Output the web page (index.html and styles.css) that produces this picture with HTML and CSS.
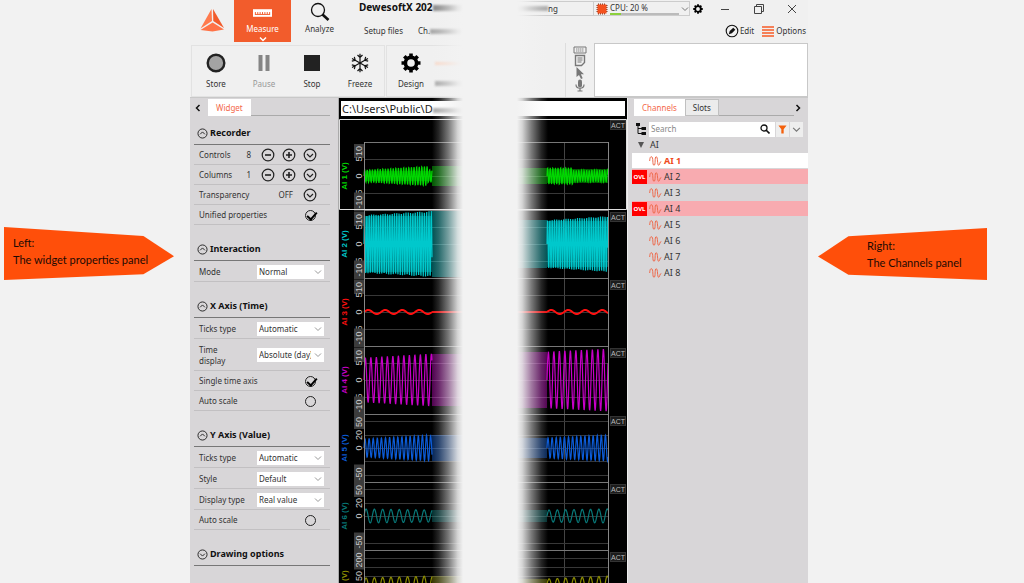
FILE: index.html
```html
<!DOCTYPE html>
<html lang="en">
<head>
<meta charset="utf-8">
<title>DewesoftX panels</title>
<link rel="stylesheet" href="styles.css">
</head>
<body>
<svg class="defs" aria-hidden="true">
  <symbol id="i-down" viewBox="0 0 14 14"><circle cx="7" cy="7" r="5.8"/><path d="M4 6l3 3 3-3"/></symbol>
  <symbol id="i-up" viewBox="0 0 14 14"><circle cx="7" cy="7" r="5.8"/><path d="M4 8l3-3 3 3"/></symbol>
  <symbol id="i-minus" viewBox="0 0 14 14"><circle cx="7" cy="7" r="5.8"/><path d="M4 7h6" stroke-width="1.6"/></symbol>
  <symbol id="i-plus" viewBox="0 0 14 14"><circle cx="7" cy="7" r="5.8"/><path d="M4 7h6M7 4v6" stroke-width="1.6"/></symbol>
  <symbol id="i-chev" viewBox="0 0 8 8"><path d="M1 2.5l3 3 3-3"/></symbol>
  <symbol id="i-gear" viewBox="0 0 20 20"><circle cx="10" cy="10" r="5.6" fill="none" stroke="#000" stroke-width="3.6"/><path d="M10 0.500v4M10 15.500v4M0.500 10h4M15.500 10h4M3.300 3.300l2.800 2.800M13.900 13.900l2.800 2.800M16.700 3.300l-2.800 2.800M6.100 13.900l-2.800 2.800" fill="none" stroke="#000" stroke-width="3.600"/></symbol>
  <symbol id="i-wave" viewBox="0 0 13 10"><path d="M.7 5C.9 1.500 1.500.7 2.300.7 4.800.7 3 9.300 5 9.300S5.300.7 7.200.7 8 9.300 9.700 9.300c1.300 0 .8-4 2.600-3.800" fill="none" stroke="#ee6a4c" stroke-width="1"/></symbol>
</svg>
<main class="stage">
  <aside class="note note-left"><p class="flag flag-left">Left:<br>The widget properties panel</p></aside>

  <section class="slice slice-left">
    <header class="topbar">
      <svg class="logo" viewBox="0 0 28 24"><path d="M13.500 1L14 13 2.500 20.500z" fill="#ff7a4d"/><path d="M15 1l.3 12L26 20z" fill="#f25c2c"/><path d="M2.500 22L14.600 14.500 26 21.500 14.500 23.500z" fill="#ff7347"/></svg>
      <button class="mode mode-on">
        <svg class="ruler" viewBox="0 0 20 8"><path d="M0 0h20v8H0z" fill="#fff"/><path d="M2.500 5.500V3M5 5.500V3M7.500 5.500V3M10 5.500V3M12.500 5.500V3M15 5.500V3M17.500 5.500V3M2 5.500h16" stroke="#f25c2c" fill="none"/></svg>
        <span>Measure</span>
        <svg class="tiny" viewBox="0 0 8 8"><path d="M1 2.500l3 3 3-3" fill="none" stroke="#fff" stroke-width="1.500"/></svg>
      </button>
      <button class="mode">
        <svg class="lens" viewBox="0 0 20 20"><circle cx="8" cy="8" r="6.500" fill="none" stroke="#111" stroke-width="1.300"/><path d="M12.500 12.500l6 5.500" stroke="#111" stroke-width="2.600"/></svg>
        <span>Analyze</span>
      </button>
      <div class="titles">
        <h1 class="apptitle">DewesoftX 202<i class="smear smear-dark"></i></h1>
        <nav class="menu"><a href="#">Setup files</a><a href="#">Ch.<i class="smear"></i></a></nav>
      </div>
    </header>
    <div class="toolbar">
      <div class="tools">
        <button class="tool"><svg viewBox="0 0 20 20"><circle cx="10" cy="10" r="8.300" fill="#a3a3a3" stroke="#222" stroke-width="2.400"/></svg>Store</button>
        <button class="tool tool-off"><svg viewBox="0 0 20 20"><path d="M4.500 2h4v16h-4zM11.500 2h4v16h-4z" fill="#858585"/></svg>Pause</button>
        <button class="tool"><svg viewBox="0 0 20 20"><path d="M2 2h16v16H2z" fill="#222"/></svg>Stop</button>
        <button class="tool"><svg viewBox="0 0 20 20"><g fill="none" stroke="#111" stroke-width="1.200"><path id="arm" d="M10 10V.8M7.500 2l2.500 2.500 2.500-2.500"/><use href="#arm" transform="rotate(60 10 10)"/><use href="#arm" transform="rotate(120 10 10)"/><use href="#arm" transform="rotate(180 10 10)"/><use href="#arm" transform="rotate(240 10 10)"/><use href="#arm" transform="rotate(300 10 10)"/></g></svg>Freeze</button>
      </div>
      <div class="tools">
        <button class="tool"><svg><use href="#i-gear"/></svg>Design</button>
        <div class="smears"><i class="smear smear-warm"></i><i class="smear"></i></div>
      </div>
    </div>
    <div class="body">
      <div class="panel">
        <div class="tabs">
          <button class="arrow" aria-label="Collapse"><svg viewBox="0 0 8 8"><path d="M5.500 1l-3 3 3 3" fill="none" stroke="#111" stroke-width="1.500"/></svg></button>
          <button class="tab tab-on">Widget</button>
          <span class="tabline"></span>
        </div>
        <section class="group">
          <h2><svg><use href="#i-up"/></svg>Recorder</h2>
          <div class="row"><span>Controls</span><b>8</b><button aria-label="Fewer controls"><svg><use href="#i-minus"/></svg></button><button aria-label="More controls"><svg><use href="#i-plus"/></svg></button><button aria-label="Choose controls"><svg><use href="#i-down"/></svg></button></div>
          <div class="row"><span>Columns</span><b>1</b><button aria-label="Fewer columns"><svg><use href="#i-minus"/></svg></button><button aria-label="More columns"><svg><use href="#i-plus"/></svg></button><button aria-label="Choose columns"><svg><use href="#i-down"/></svg></button></div>
          <div class="row"><span>Transparency</span><b>OFF</b><button aria-label="Choose transparency"><svg><use href="#i-down"/></svg></button></div>
          <div class="row"><label for="unified">Unified properties</label><input id="unified" type="checkbox" checked></div>
        </section>
        <section class="group">
          <h2><svg><use href="#i-up"/></svg>Interaction</h2>
          <div class="row pick"><label for="mode">Mode</label><span class="sel"><select id="mode"><option>Normal</option></select><svg><use href="#i-chev"/></svg></span></div>
        </section>
        <section class="group">
          <h2><svg><use href="#i-up"/></svg>X Axis (Time)</h2>
          <div class="row pick"><label for="xt">Ticks type</label><span class="sel"><select id="xt"><option>Automatic</option></select><svg><use href="#i-chev"/></svg></span></div>
          <div class="row pick tall"><label for="td">Time display</label><span class="sel"><select id="td"><option>Absolute (day)</option></select><svg><use href="#i-chev"/></svg></span></div>
          <div class="row"><label for="single">Single time axis</label><input id="single" type="checkbox" checked></div>
          <div class="row"><label for="xauto">Auto scale</label><input id="xauto" type="checkbox"></div>
        </section>
        <section class="group">
          <h2><svg><use href="#i-up"/></svg>Y Axis (Value)</h2>
          <div class="row pick"><label for="yt">Ticks type</label><span class="sel"><select id="yt"><option>Automatic</option></select><svg><use href="#i-chev"/></svg></span></div>
          <div class="row pick"><label for="st">Style</label><span class="sel"><select id="st"><option>Default</option></select><svg><use href="#i-chev"/></svg></span></div>
          <div class="row pick"><label for="dt">Display type</label><span class="sel"><select id="dt"><option>Real value</option></select><svg><use href="#i-chev"/></svg></span></div>
          <div class="row"><label for="yauto">Auto scale</label><input id="yauto" type="checkbox"></div>
        </section>
        <section class="group">
          <h2><svg><use href="#i-down"/></svg>Drawing options</h2>
        </section>
      </div>
      <div class="recorder">
        <div class="path"><span>C:\Users\Public\D<i class="smear"></i></span></div>
        <svg class="plot" id="plot-left"></svg>
      </div>
    </div>
    <div class="fade"></div>
  </section>

  <div class="gap"></div>

  <section class="slice slice-right">
    <header class="topbar">
      <div class="status">
        <div class="job"><i class="smear"></i>ng</div>
        <div class="cpu">
          <svg class="chip" viewBox="0 0 12 12"><path d="M.5 2.500h11M.5 4.500h11M.5 6.500h11M.5 8.500h11M2.500.5v11M4.500.5v11M6.500.5v11M8.500.5v11" stroke="#7a3a28"/><path d="M1.500 1.500h9v9h-9z" fill="#f4511e"/></svg>
          <label>CPU: 20 %<progress value="16" max="100"></progress></label>
          <svg class="chev"><use href="#i-chev"/></svg>
        </div>
        <button class="ico" aria-label="Settings"><svg class="gear"><use href="#i-gear"/></svg></button>
        <div class="win">
          <button class="ico" aria-label="Minimize"><svg viewBox="0 0 10 10"><path d="M1 5.500h8"/></svg></button>
          <button class="ico" aria-label="Restore"><svg viewBox="0 0 10 10"><path d="M.5 2.500h7v7h-7zM2.500 2.500v-2h7v7h-2"/></svg></button>
          <button class="ico" aria-label="Close"><svg viewBox="0 0 10 10"><path d="M1 1l8 8M9 1L1 9"/></svg></button>
        </div>
      </div>
      <div class="actions">
        <button><svg viewBox="0 0 14 14"><circle cx="7" cy="7" r="5.800" fill="none" stroke="#111" stroke-width="1.100"/><path d="M3.800 10.200l.9-3.200 3.600-3.200 2 2-3.400 3.500z" fill="#111"/></svg>Edit</button>
        <button class="opt"><svg viewBox="0 0 14 14"><path d="M1 3h12M1 6h12M1 9h12M1 12h12" stroke="#f58058" stroke-width="1.800"/></svg>Options</button>
      </div>
    </header>
    <div class="toolbar">
      <div class="blank"></div>
      <div class="marks">
        <svg viewBox="0 0 14 8"><path d="M1 1h12v6H1z" fill="none" stroke="#777"/><path d="M3 3h8M3 5h8" stroke="#888" stroke-dasharray="1.500 .5"/></svg>
        <svg viewBox="0 0 14 13"><path d="M2.500 1.500h9v7l-3 3h-6z" fill="none" stroke="#777" stroke-width="1.400"/><path d="M4.500 4h5M4.500 6h5M4.500 8h4" stroke="#777"/></svg>
        <svg viewBox="0 0 14 12"><path d="M3.500 0v10l2.500-2 2 4 1.700-.8L7.900 7.300H11z" fill="#777"/></svg>
        <svg viewBox="0 0 14 13"><path d="M5 2.500a2 2 0 014 0v4a2 2 0 01-4 0z" fill="#777"/><path d="M3 5.500c0 5 8 5 8 0M7 9v3M4.500 12h5" fill="none" stroke="#777" stroke-width="1.200"/></svg>
      </div>
      <textarea class="notes" aria-label="Notes"></textarea>
    </div>
    <div class="body">
      <div class="recorder">
        <div class="path"><span></span></div>
        <svg class="plot" id="plot-right"></svg>
      </div>
      <div class="channels">
        <div class="tabs">
          <button class="tab tab-on">Channels</button><button class="tab">Slots</button>
          <span class="tabline"></span>
          <button class="arrow" aria-label="Expand"><svg viewBox="0 0 8 8"><path d="M2.500 1l3 3-3 3" fill="none" stroke="#111" stroke-width="1.500"/></svg></button>
        </div>
        <div class="search">
          <svg class="tree" viewBox="0 0 10 12"><path d="M0 0h4v3H0zM5.500 4H10v3H5.500zM5.500 9H10v3H5.500z" fill="#111"/><path d="M2 2v8.500h4M2 5.500h4" fill="none" stroke="#111"/></svg>
          <label class="find"><input type="text" placeholder="Search" aria-label="Search"><svg viewBox="0 0 10 10"><circle cx="4" cy="4" r="3" fill="none" stroke="#111" stroke-width="1.300"/><path d="M6 6l3.500 3.500" stroke="#111" stroke-width="1.600"/></svg></label>
          <button class="fbtn" aria-label="Filter"><svg viewBox="0 0 10 10"><path d="M.5.500h9L6.300 4.800V9.500H3.700V4.800z" fill="#f4600c"/></svg></button>
          <button class="fbtn" aria-label="Filter menu"><svg class="chev"><use href="#i-chev"/></svg></button>
        </div>
        <div class="root"><svg viewBox="0 0 6 6"><path d="M0 0h6L3 6z" fill="#555"/></svg>AI</div>
        <ul class="list">
          <li class="picked"><i></i><svg><use href="#i-wave"/></svg>AI 1</li>
          <li class="over"><i>OVL</i><svg><use href="#i-wave"/></svg>AI 2</li>
          <li><i></i><svg><use href="#i-wave"/></svg>AI 3</li>
          <li class="over"><i>OVL</i><svg><use href="#i-wave"/></svg>AI 4</li>
          <li><i></i><svg><use href="#i-wave"/></svg>AI 5</li>
          <li><i></i><svg><use href="#i-wave"/></svg>AI 6</li>
          <li><i></i><svg><use href="#i-wave"/></svg>AI 7</li>
          <li><i></i><svg><use href="#i-wave"/></svg>AI 8</li>
        </ul>
      </div>
    </div>
    <div class="fade"></div>
  </section>

  <aside class="note note-right"><p class="flag flag-right">Right:<br>The Channels panel</p></aside>
</main>
<script src="plots.js"></script>
</body>
</html>
```
FILE: styles.css
```css
* { box-sizing: border-box; }
body { margin: 0; background: #f2f2f2; color: #333; font: 8px/12px "Noto Sans", sans-serif; }
button, input, select, textarea { font: inherit; color: inherit; }
button { border: 0; padding: 0; background: none; }
h1, h2, p, ul { margin: 0; padding: 0; }
a { color: inherit; text-decoration: none; }
svg { display: block; flex: none; }
.defs { position: absolute; width: 0; height: 0; }

.stage { display: grid; grid-template-columns: 190fr 275fr 50fr 293fr 216fr; min-height: 100vh; overflow: hidden; }

/* callouts */
.note { min-width: 0; padding-top: 227px; }
.flag { color: #1c0a04; background: #ff4f0a; font: 11px/17px Lato, sans-serif; white-space: nowrap; }
.flag-left { margin: 0 16px 0 4px; padding: 7px 0 12px 9px; clip-path: polygon(0 0, 82% 17%, 100% 55%, 82% 89%, 0 100%); }
.flag-right { margin: 1px 37px 0 10px; padding: 9px 0 9px 49px; clip-path: polygon(0 55%, 18% 16%, 100% 0, 100% 100%, 18% 90%); }

/* window slices */
.slice { position: relative; display: flex; flex-direction: column; min-width: 0; background: #f0f0f0; overflow: hidden; }
.fade { position: absolute; top: 0; bottom: 0; width: 33px; pointer-events: none; }
.slice-left .fade { right: 0; background: linear-gradient(to right, #f2f2f200, #f2f2f228 20%, #f2f2f280 50%, #f2f2f2e0 78%, #f2f2f2 94%); }
.slice-right .fade { left: 0; background: linear-gradient(to left, #f2f2f200, #f2f2f228 20%, #f2f2f280 50%, #f2f2f2e0 78%, #f2f2f2 94%); }
.smear { display: inline-block; width: 32px; height: 5px; background: #aaa; filter: blur(1px); }
.smear-dark { height: 6px; background: #888; }
.smear-warm { background: #f8d8c8; height: 3px; }

.topbar { height: 43px; }
.slice-left .topbar { display: flex; }
.logo { width: 28px; height: 24px; margin: 8px 8px 0 8px; }
.mode { display: flex; flex-direction: column; align-items: center; width: 57px; height: 42px; }
.mode-on { background: #f25c2c; color: #fff; }
.ruler { width: 19px; height: 8px; margin: 9px 0 6px; }
.tiny { width: 8px; height: 8px; }
.lens { width: 20px; height: 20px; margin: 2px 0 1px; }
.titles { flex: 1; min-width: 0; padding-left: 11px; white-space: nowrap; }
.apptitle { font-size: 10px; line-height: 15px; color: #111; }
.menu { display: flex; gap: 15px; padding: 10px 0 0 5px; }

.toolbar { display: flex; height: 55px; gap: 1px; border-bottom: 1px solid #c8c8c8; padding: 2px 0 1px; }
.slice-left .toolbar { padding-left: 1px; }
.tools { display: flex; border: 1px solid #e2e2e2; height: 52px; }
.tools:last-child { flex: 1; }
.tool { display: flex; flex-direction: column; align-items: center; gap: 5px; width: 48px; padding-top: 7px; }
.tool svg { width: 20px; height: 20px; }
.tool-off { color: #999; }
.smears { display: flex; flex-direction: column; gap: 16px; padding-top: 16px; }

.body { display: flex; flex: 1; }
.panel { width: 148px; background: #d8d6d8; padding: 1px 8px 0 4px; }
.tabs { display: flex; height: 17px; }
.arrow { width: 10px; }
.arrow svg { width: 8px; height: 8px; }
.tab { padding: 0 7px; background: #ececec; border: 1px solid #c0c0c0; }
.tab-on { background: #fff; color: #f4694a; border-color: #fff; }
.panel .tab { margin-left: 4px; }
.tabline { flex: 1; border-bottom: 1px solid #aaa; }

.group { margin-bottom: 13px; }
.group:first-of-type { margin-top: 6px; }
.group h2 { display: flex; align-items: center; gap: 2px; height: 23px; padding-left: 3px; border-bottom: 1px solid #777; font-size: 9px; color: #111; }
.group h2 svg { width: 11px; height: 11px; }
.group svg { fill: none; stroke: #222; stroke-width: 1.200; }
.row { display: flex; align-items: center; gap: 7px; min-height: 20px; padding: 1px 13px 0 5px; border-bottom: 1px solid #c2c0c2; }
.row > :first-child { flex: 1; }
.row b { font-weight: 400; margin-right: 3px; }
.row button svg { width: 14px; height: 14px; }
.row input { appearance: none; width: 11px; height: 11px; margin: 0 1px; border: 1px solid #222; border-radius: 50%; }
.row input:checked::after { content: ""; display: block; width: 8px; height: 4px; margin: 1px; border: solid #000; border-width: 0 0 2px 2px; transform: rotate(-48deg); }
.pick { min-height: 21px; padding-right: 6px; }
.tall { min-height: 32px; line-height: 11px; }
.tall label { padding-right: 24px; }
.sel { display: flex; align-items: center; width: 67px; height: 14px; background: #fff; }
.sel select { appearance: none; width: 54px; height: 14px; padding: 0 0 0 2px; border: 0; background: none; line-height: 14px; overflow: hidden; text-overflow: clip; }
.sel svg { width: 8px; height: 8px; margin-left: 3px; stroke: #999; stroke-width: 1; }

.recorder { display: flex; flex: 1; flex-direction: column; min-width: 0; background: #000; }
.slice-left .recorder { border-left: 1px solid #aaa; }
.path { height: 21px; padding: 3px 2px; }
.path span { display: block; height: 15px; background: #fff; color: #222; padding-left: 1px; font-size: 11px; line-height: 15px; white-space: nowrap; overflow: hidden; }
.plot { width: 100%; height: 464px; font: 9px "Liberation Sans", sans-serif; }

/* right slice */
.status { display: flex; height: 17px; align-items: center; }
.job { width: 79px; height: 15px; padding-left: 0; border: 1px solid #ccc; display: flex; align-items: center; }
.cpu { display: flex; width: 96px; height: 15px; align-items: center; gap: 2px; border: 1px solid #ccc; border-left: 0; padding-left: 2px; }
.chip { width: 12px; height: 12px; }
.cpu label { width: 69px; line-height: 10px; }
.cpu progress { appearance: none; display: block; width: 69px; height: 2px; border: 0; }
.cpu progress::-webkit-progress-bar { background: #bbb; }
.cpu progress::-webkit-progress-value { background: #8bd03c; }
.chev { width: 8px; height: 8px; fill: none; stroke: #777; }
.gear { width: 10px; height: 10px; margin-left: 3px; }
.win { display: flex; flex: 1; justify-content: space-between; padding: 0 11px 0 17px; }
.win svg { width: 10px; height: 10px; fill: none; stroke: #444; stroke-width: 1; }
.actions { display: flex; justify-content: flex-end; gap: 7px; padding: 7px 2px 0 0; }
.actions button { display: flex; align-items: center; gap: 1px; }
.actions svg { width: 14px; height: 14px; }
.slice-right .toolbar { padding: 0; gap: 0; }
.blank { width: 51px; border-right: 1px solid #ddd; }
.marks { width: 28px; padding: 3px 0 0 7px; }
.marks svg { width: 14px; }
.notes { flex: 1; min-width: 0; height: 54px; border: 1px solid #c8c8c8; background: #fff; resize: none; }
.channels { width: 181px; background: #d8d6d8; border-left: 1px solid #eee; padding-top: 1px; }
.channels .tabs { padding: 0 4px 0 6px; }
.search { display: flex; align-items: center; height: 16px; margin: 5px 5px 0 8px; gap: 1px; }
.tree { width: 10px; height: 12px; margin-right: 2px; }
.find { display: flex; flex: 1; min-width: 0; align-items: center; height: 15px; background: #fff; padding-right: 5px; }
.find input { flex: 1; min-width: 0; width: 0; border: 0; padding: 0 2px; background: none; outline: 0; }
.find input::placeholder { color: #888; }
.find svg { width: 10px; height: 10px; }
.fbtn { display: flex; align-items: center; justify-content: center; width: 13px; height: 15px; background: #eee; }
.fbtn svg { width: 9px; height: 9px; }
.root { display: flex; align-items: center; gap: 6px; height: 16px; padding-left: 10px; font-size: 9px; }
.root svg { width: 6px; height: 6px; }
.list { list-style: none; margin-left: 4px; font-size: 9px; }
.list li { display: flex; align-items: center; height: 16px; border-bottom: 1px solid #d8d6d8; }
.list i { width: 15px; height: 14px; margin-right: 2px; color: #fff; font: bold 6px/14px "Noto Sans", sans-serif; text-align: center; }
.list svg { width: 13px; height: 10px; margin-right: 2px; }
.list .over { background: #f8abb0; }
.list .over i { background: #f00; }
.list .picked { background: #fff; color: #f04a20; font-weight: 700; }
```
FILE: plots.js
```js
const NS = "http://www.w3.org/2000/svg";
const STEP = 68;
const MID = 57;

function add(svg, tag, attrs, text) {
  const el = document.createElementNS(NS, tag);
  for (const key in attrs) el.setAttribute(key, attrs[key]);
  if (text) el.textContent = text;
  svg.appendChild(el);
}

const V10 = { grid: [-17, 0, 17], marks: [["10", -25, 1], ["5", -17], ["0", 0], ["5", 16], ["-10", 26, 1]] };
const V50 = { grid: [-27, -13, 0, 13, 27], marks: [["50", -26, 1], ["20", -13], ["0", 0], ["-50", 26, 1]] };
const V200 = { grid: [-26, -17, -8, 0], marks: [["200", -24, 1], ["50", -8]] };

// left / right: [amplitude at start, amplitude at end]
const channels = [
  { color: "#00d800", period: 2.6, left: [6, 10], right: [8, 9], axis: V10 },
  { color: "#00c8cc", period: 2.3, left: [29, 33], right: [24, 28], axis: V10 },
  { color: "#ff1010", period: 17, left: [2, 2], right: [2, 2], axis: V10, width: 2 },
  { color: "#c800c8", period: 5.5, left: [22, 26], right: [28, 31], axis: V10 },
  { color: "#0c5cd8", period: 4.1, left: [9, 13], right: [10, 13], axis: V50 },
  { color: "#087878", period: 8.3, left: [7, 6], right: [6, 7], axis: V50 },
  { color: "#8c8c00", period: 8.3, left: [6, 8], right: [5, 8], axis: V200 }
];

function wave(x0, x1, y, amps, period, drop) {
  let d = "";
  for (let x = x0; x <= x1; x += 0.25) {
    const t = (x - x0) / (x1 - x0);
    let a = amps[0] + (amps[1] - amps[0]) * t;
    if (drop && x > drop) a *= 0.65;
    d += (d ? "L" : "M") + x.toFixed(2) + " " + (y - a * Math.sin((x - x0) * 2 * Math.PI / period)).toFixed(2);
  }
  return d;
}

function draw(id, side) {
  const svg = document.getElementById(id);
  const isLeft = side === "left";
  const g0 = isLeft ? 25 : 0;
  const g1 = isLeft ? 126 : 93;
  const x0 = isLeft ? 25 : 32;
  const x1 = 93;
  if (!isLeft) add(svg, "path", { d: "M49.5 23V464", stroke: "#444" });
  channels.forEach((c, i) => {
    const y = MID + i * STEP;
    c.axis.grid.forEach(g => add(svg, "path", { d: `M${g0} ${y + g}.5H${g1}`, stroke: "#383838" }));
    add(svg, "path", { d: `M${g0} ${y - 34}.5H${g1}`, stroke: "#777" });
    if (isLeft) {
      c.axis.marks.forEach(([text, dy, box]) => {
        const h = text.length * 5;
        if (box) add(svg, "rect", { x: 15, y: y + dy - h / 2 - 2, width: 10, height: h + 4, fill: "#3c3c3c" });
        add(svg, "text", { transform: `translate(23 ${y + dy}) rotate(-90)`, "text-anchor": "middle", fill: "#ccc" }, text);
      });
      add(svg, "text", { transform: `translate(8 ${y}) rotate(-90)`, "text-anchor": "middle", "font-size": 8, "font-weight": 700, fill: c.color }, `AI ${i + 1} (V)`);
    } else {
      const top = i ? y - 32 : 1;
      add(svg, "rect", { x: 95.5, y: top + 0.5, width: 15, height: 9, fill: "#1c1c1c", stroke: "#333" });
      add(svg, "text", { x: 96, y: top + 8, style: "font-size:7px", fill: "#bbb" }, "ACT");
    }
    const amps = c[side];
    const edge = isLeft ? amps[1] : amps[0];
    add(svg, "rect", { x: isLeft ? 93 : 0, y: i === 2 ? y - 1 : y - edge, width: isLeft ? 33 : 32, height: i === 2 ? 2 : edge * 2, fill: c.color, opacity: i === 2 ? 0.9 : 0.4 });
    if (i < 2) {
      const low = Math.min(amps[0], amps[1]);
      add(svg, "rect", { x: x0, y: y - low + 1, width: x1 - x0, height: low * 2 - 2, fill: c.color, opacity: 0.4 });
    }
    add(svg, "path", {
      d: wave(x0, x1, y, amps, c.period, i === 0 ? (isLeft ? 89 : 58) : 0),
      fill: "none", stroke: c.color, "stroke-width": c.width || 1.2
    });
  });
  add(svg, "path", { d: isLeft ? "M25.5 23V464" : "M93.5 23V464", stroke: "#888" });
  // frame of the selected channel
  add(svg, "path", { d: isLeft ? "M130 .5H.5V90.500H130" : "M0 .5H111.500V90.500H0", fill: "none", stroke: "#ddd" });
}

draw("plot-left", "left");
draw("plot-right", "right");
```
